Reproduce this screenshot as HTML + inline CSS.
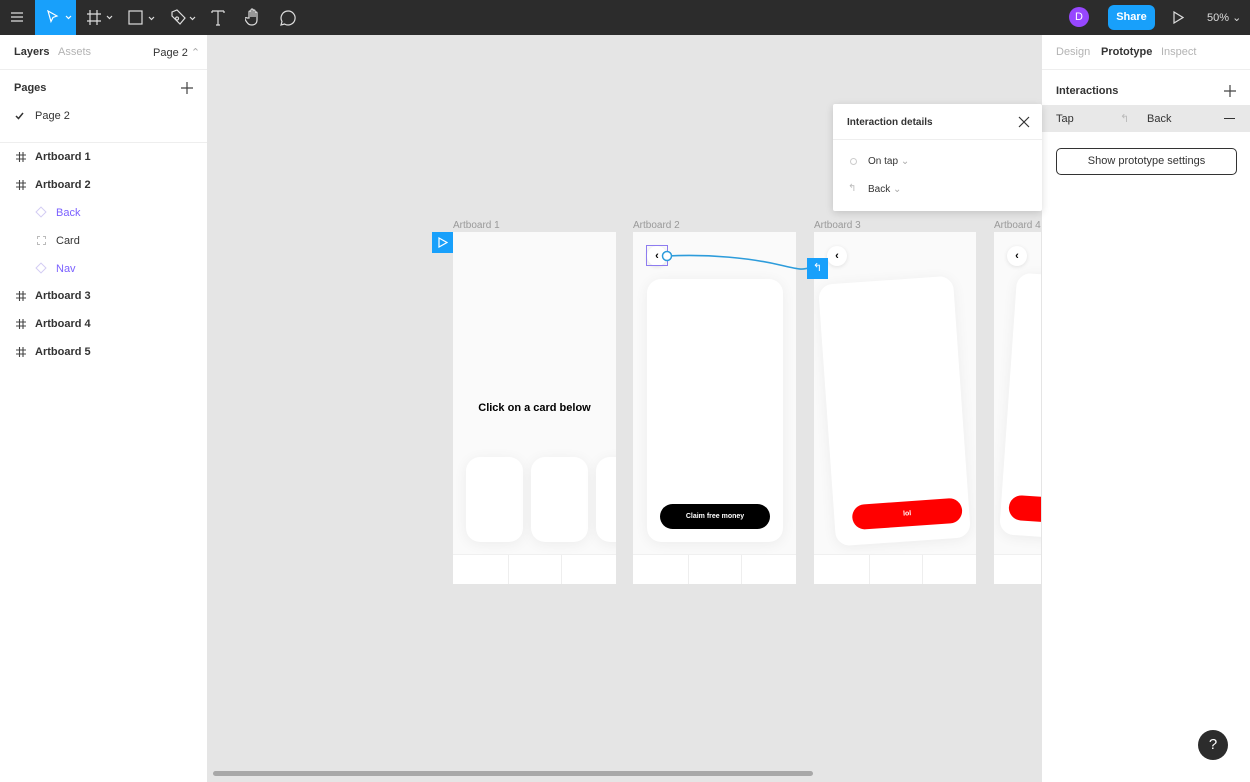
<!DOCTYPE html>
<html><head><meta charset="utf-8"><style>
*{box-sizing:border-box;margin:0;padding:0}
body{width:1250px;height:782px;overflow:hidden;background:#e5e5e5;font-family:"Liberation Sans",sans-serif;position:relative;font-size:11px;color:#333}
.a{position:absolute}
.top{left:0;top:0;width:1250px;height:35px;background:#2c2c2c}
.lp{left:0;top:35px;width:208px;height:747px;background:#fff;border-right:1px solid #e5e5e5}
.rp{left:1041px;top:35px;width:209px;height:747px;background:#fff;border-left:1px solid #e5e5e5}
.b{font-weight:bold;color:#333}
.ab{background:#fafafa;overflow:hidden}
.lbl{color:#999;font-size:10px}
.nav{left:0;bottom:0;height:30px;width:100%;background:#fff;border-top:1px solid #f0f0f0}
.nav i{position:absolute;top:0;bottom:0;width:1px;background:#eee}
.card{background:#fff;border-radius:14px;box-shadow:0 2px 14px rgba(0,0,0,.06)}
.bk{width:20px;height:20px;border-radius:50%;background:#fff;box-shadow:0 1px 4px rgba(0,0,0,.1);font-size:11px;font-weight:bold;text-align:center;line-height:20px;color:#000}
</style></head><body>
<svg width="0" height="0" style="position:absolute"><defs><g id="h"><path d="M3.5 0v10M7 0v10M0 3h10M0 7h10" stroke="#444" stroke-width="1.1" fill="none"/></g></defs></svg>
<div class="a top">
 <svg class="a" style="left:10px;top:10px" width="14" height="14"><path d="M1 3h12M1 7h12M1 11h12" stroke="#ddd" stroke-width="1.2"/></svg>
 <div class="a" style="left:35px;top:0;width:41px;height:35px;background:#18a0fb"></div>
 <svg class="a" style="left:46px;top:10px" width="30" height="16"><path d="M2 1l9 5-4 1.5-2 4z" fill="none" stroke="#fff" stroke-width="1.2"/><path d="M20 6l2.5 2.5L25 6" fill="none" stroke="#fff" stroke-width="1.2"/></svg>
 <svg class="a" style="left:86px;top:9px" width="30" height="18"><path d="M4 1v15M11 1v15M1 5h14M1 12h14" stroke="#ddd" stroke-width="1.2"/><path d="M21 7l2.5 2.5L26 7" fill="none" stroke="#ddd" stroke-width="1.2"/></svg>
 <svg class="a" style="left:128px;top:10px" width="30" height="16"><rect x="1" y="1" width="13" height="13" fill="none" stroke="#ddd" stroke-width="1.2"/><path d="M21 7l2.5 2.5L26 7" fill="none" stroke="#ddd" stroke-width="1.2"/></svg>
 <svg class="a" style="left:170px;top:9px" width="30" height="18"><path d="M2 3l5-2 8 8-5 6-8-8z M7 8a1.5 1.5 0 1 0 .1 0" fill="none" stroke="#ddd" stroke-width="1.2"/><path d="M20 8l2.5 2.5L25 8" fill="none" stroke="#ddd" stroke-width="1.2"/></svg>
 <svg class="a" style="left:211px;top:10px" width="14" height="16"><path d="M1 1h12M7 1v14M5 15h4M1 1v2M13 1v2" stroke="#ddd" stroke-width="1.2" fill="none"/></svg>
 <svg class="a" style="left:245px;top:8px" width="18" height="19"><path d="M4 10V4a1 1 0 0 1 2 0v5V2a1 1 0 0 1 2 0v7V3a1 1 0 0 1 2 0v6V5a1 1 0 0 1 2 0v7c0 3-2 5-5 5s-4-1-6-4l-1-2c-.5-1 1-2 2-1z" fill="none" stroke="#ddd" stroke-width="1.2"/></svg>
 <svg class="a" style="left:279px;top:9px" width="18" height="18"><path d="M9 2a7 7 0 1 1-3.5 13L2 16l1-3.5A7 7 0 0 1 9 2z" fill="none" stroke="#ddd" stroke-width="1.2"/></svg>
 <div class="a" style="left:1069px;top:7px;width:20px;height:20px;border-radius:50%;background:#9747ff;color:#fff;text-align:center;line-height:20px;font-size:11px">D</div>
 <div class="a" style="left:1108px;top:5px;width:47px;height:25px;border-radius:6px;background:#18a0fb;color:#fff;font-weight:bold;text-align:center;line-height:25px;font-size:11px">Share</div>
 <svg class="a" style="left:1172px;top:11px" width="12" height="13"><path d="M2 1l9 5.5L2 12z" fill="none" stroke="#ddd" stroke-width="1.2"/></svg>
 <div class="a" style="left:1207px;top:11px;color:#ddd;font-size:11px">50% ⌄</div>
</div>
<div class="a lp">
 <div class="a b" style="left:14px;top:11px">Layers</div>
 <div class="a" style="left:58px;top:11px;color:#b3b3b3">Assets</div>
 <div class="a" style="left:153px;top:11px">Page 2 <span style="color:#aaa">⌃</span></div>
 <div class="a" style="left:0;top:34px;width:207px;height:1px;background:#eee"></div>
 <div class="a b" style="left:14px;top:47px">Pages</div>
 <svg class="a" style="left:181px;top:47px" width="12" height="12"><path d="M6 0v12M0 6h12" stroke="#444" stroke-width="1.2"/></svg>
 <svg class="a" style="left:15px;top:77px" width="9" height="8"><path d="M1 4l2.5 2.5L8 1" fill="none" stroke="#333" stroke-width="1.5"/></svg>
 <div class="a" style="left:35px;top:75px">Page 2</div>
 <div class="a" style="left:0;top:107px;width:207px;height:1px;background:#eee"></div>
</div>
<div class="a" style="left:0;top:150px;width:207px;line-height:12px">
 <svg class="a" style="left:16px;top:2px" width="10" height="10"><use href="#h"/></svg><div class="a b" style="left:35px;top:1px">Artboard 1</div>
 <svg class="a" style="left:16px;top:30px" width="10" height="10"><use href="#h"/></svg><div class="a b" style="left:35px;top:29px">Artboard 2</div>
 <div class="a" style="left:37px;top:58px;width:8px;height:8px;border:1px solid #d3ccf3;transform:rotate(45deg)"></div><div class="a" style="left:56px;top:57px;color:#7b61ff">Back</div>
 <div class="a" style="left:37px;top:86px;width:9px;height:9px;border:1px dashed #bbb"></div><div class="a" style="left:56px;top:85px">Card</div>
 <div class="a" style="left:37px;top:114px;width:8px;height:8px;border:1px solid #d3ccf3;transform:rotate(45deg)"></div><div class="a" style="left:56px;top:113px;color:#7b61ff">Nav</div>
 <svg class="a" style="left:16px;top:141px" width="10" height="10"><use href="#h"/></svg><div class="a b" style="left:35px;top:140px">Artboard 3</div>
 <svg class="a" style="left:16px;top:169px" width="10" height="10"><use href="#h"/></svg><div class="a b" style="left:35px;top:168px">Artboard 4</div>
 <svg class="a" style="left:16px;top:197px" width="10" height="10"><use href="#h"/></svg><div class="a b" style="left:35px;top:196px">Artboard 5</div>
</div>
<div class="a rp">
 <div class="a" style="left:14px;top:11px;color:#b3b3b3">Design</div>
 <div class="a b" style="left:59px;top:11px">Prototype</div>
 <div class="a" style="left:119px;top:11px;color:#b3b3b3">Inspect</div>
 <div class="a" style="left:0;top:34px;width:209px;height:1px;background:#eee"></div>
 <div class="a b" style="left:14px;top:50px">Interactions</div>
 <svg class="a" style="left:182px;top:50px" width="12" height="12"><path d="M6 0v12M0 6h12" stroke="#444" stroke-width="1.2"/></svg>
 <div class="a" style="left:0;top:70px;width:209px;height:27px;background:#e8e8e8"></div>
 <div class="a" style="left:14px;top:78px">Tap</div>
 <div class="a" style="left:78px;top:77px;color:#bbb">↰</div>
 <div class="a" style="left:105px;top:78px">Back</div>
 <div class="a" style="left:182px;top:83px;width:11px;height:1px;background:#333"></div>
 <div class="a" style="left:14px;top:113px;width:181px;height:27px;border:1px solid #333;border-radius:5px;text-align:center;line-height:25px">Show prototype settings</div>
</div>
<div class="a lbl" style="left:453px;top:220px">Artboard 1</div>
<div class="a lbl" style="left:633px;top:220px">Artboard 2</div>
<div class="a lbl" style="left:814px;top:220px">Artboard 3</div>
<div class="a lbl" style="left:994px;top:220px;width:47px;overflow:hidden;white-space:nowrap">Artboard 4</div>
<div class="a" style="left:432px;top:232px;width:21px;height:21px;background:#18a0fb"></div>
<svg class="a" style="left:438px;top:237px" width="10" height="11"><path d="M1 1l8 4.5L1 10z" fill="none" stroke="#fff" stroke-width="1.2"/></svg>
<div class="a ab" style="left:453px;top:232px;width:163px;height:352px">
 <div class="a b" style="left:0;width:163px;top:170px;text-align:center;color:#000;font-size:11px">Click on a card below</div>
 <div class="a card" style="left:13px;top:225px;width:57px;height:85px"></div>
 <div class="a card" style="left:78px;top:225px;width:57px;height:85px"></div>
 <div class="a card" style="left:143px;top:225px;width:57px;height:85px"></div>
 <div class="a nav"><i style="left:55px"></i><i style="left:108px"></i></div>
</div>
<div class="a ab" style="left:633px;top:232px;width:163px;height:352px">
 <div class="a bk" style="left:14px;top:14px">‹</div>
 <div class="a card" style="left:14px;top:47px;width:136px;height:263px"></div>
 <div class="a" style="left:27px;top:272px;width:110px;height:25px;border-radius:13px;background:#000;color:#fff;font-size:7px;font-weight:bold;text-align:center;line-height:25px">Claim free money</div>
 <div class="a nav"><i style="left:55px"></i><i style="left:108px"></i></div>
</div>
<div class="a ab" style="left:814px;top:232px;width:162px;height:352px">
 <div class="a bk" style="left:13px;top:14px">‹</div>
 <div class="a card" style="left:13px;top:48px;width:135px;height:262px;transform:rotate(-4deg)">
  <div class="a" style="left:18px;top:222px;width:110px;height:25px;border-radius:13px;background:#f00;color:#fff;font-size:7px;font-weight:bold;text-align:center;line-height:25px">lol</div>
 </div>
 <div class="a nav"><i style="left:55px"></i><i style="left:108px"></i></div>
</div>
<div class="a ab" style="left:994px;top:232px;width:47px;height:352px">
 <div class="a bk" style="left:13px;top:14px">‹</div>
 <div class="a card" style="left:14px;top:45px;width:135px;height:262px;transform:rotate(4deg)">
  <div class="a" style="left:8px;top:222px;width:110px;height:25px;border-radius:13px;background:#f00"></div>
 </div>
 <div class="a nav"><i style="left:55px"></i></div>
</div>
<div class="a" style="left:646px;top:245px;width:22px;height:21px;border:1px solid #8e7cf0"></div>
<svg class="a" style="left:640px;top:240px" width="200" height="45"><path d="M27 16C70 14 110 18 140 25S160 28 172 28" fill="none" stroke="#2d9cdb" stroke-width="1.6"/><circle cx="27" cy="16" r="4.5" fill="#fff" stroke="#2d9cdb" stroke-width="1.5"/></svg>
<div class="a" style="left:807px;top:258px;width:21px;height:21px;background:#18a0fb;color:#fff;text-align:center;line-height:21px;font-size:11px">↰</div>
<div class="a" style="left:833px;top:104px;width:209px;height:107px;background:#fff;box-shadow:0 2px 8px rgba(0,0,0,.15);border-radius:2px">
 <div class="a b" style="left:14px;top:13px;font-size:10px">Interaction details</div>
 <svg class="a" style="left:185px;top:12px" width="12" height="12"><path d="M1 1l10 10M11 1L1 11" stroke="#333" stroke-width="1.2"/></svg>
 <div class="a" style="left:0;top:35px;width:209px;height:1px;background:#eee"></div>
 <div class="a" style="left:17px;top:54px;width:7px;height:7px;border:1px solid #ccc;border-radius:50%"></div>
 <div class="a" style="left:35px;top:52px;font-size:10px">On tap <span style="color:#aaa">⌄</span></div>
 <div class="a" style="left:15px;top:79px;color:#bbb;font-size:10px">↰</div>
 <div class="a" style="left:35px;top:80px;font-size:10px">Back <span style="color:#aaa">⌄</span></div>
</div>
<div class="a" style="left:213px;top:771px;width:600px;height:5px;border-radius:3px;background:#a8a8a8"></div>
<div class="a" style="left:1198px;top:730px;width:30px;height:30px;border-radius:50%;background:#2c2c2c;color:#fff;text-align:center;line-height:30px;font-size:15px">?</div>
</body></html>
